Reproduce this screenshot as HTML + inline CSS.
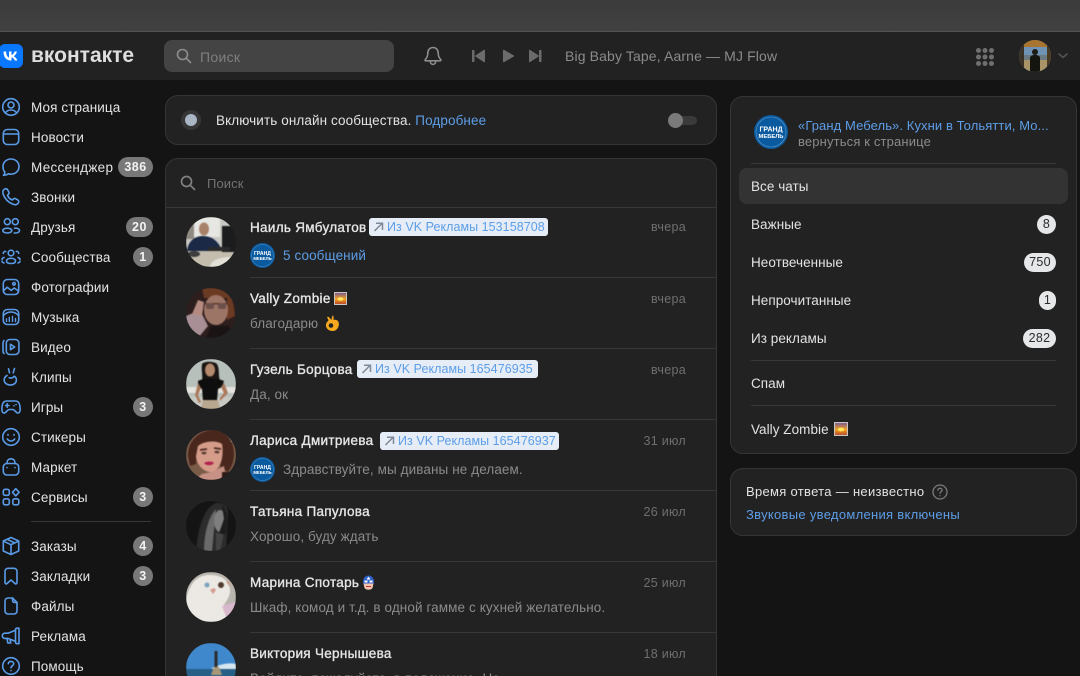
<!DOCTYPE html>
<html lang="ru"><head><meta charset="utf-8"><title>ВКонтакте</title>
<style>
*{box-sizing:border-box}
html,body{margin:0;width:1080px;height:676px;overflow:hidden;background:#141414;font-family:"Liberation Sans","Noto Sans CJK SC",sans-serif;color:#e1e3e6}
#r{position:absolute;left:0;top:0;width:1080px;height:676px;overflow:hidden;background:#141414}
.a{position:absolute;white-space:nowrap}
svg{display:block}
.t{position:absolute;white-space:nowrap;font-size:13.5px;line-height:18px;letter-spacing:.1px;margin-top:1px}
.nav{left:31px;color:#e3e3e3}
.ic{position:absolute;left:0;width:22px;height:22px;fill:none;stroke:#5a9be8;stroke-width:1.6;stroke-linecap:round;stroke-linejoin:round}
.b{position:absolute;height:20px;border-radius:10px;background:#787878;color:#f2f2f2;font-weight:bold;font-size:12.5px;line-height:20px;text-align:center;letter-spacing:.5px}
.card{position:absolute;background:#222;border:1px solid #353535;border-radius:13px}
.n{left:250px;color:#e6e6e6;letter-spacing:.3px;-webkit-text-stroke:.35px #e6e6e6}
.s{color:#8b8b8b}
.d{position:absolute;height:1px;background:#373737}
.time{position:absolute;color:#6f6f6f;font-size:12.5px;line-height:18px;right:394px;letter-spacing:.3px;white-space:nowrap}
.tag{position:absolute;height:18px;background:#e6edf6;border-radius:3px;color:#5d9ee8;font-size:12.5px;line-height:18px;padding-left:18px;white-space:nowrap;letter-spacing:.05px}
.tag svg{position:absolute;left:4px;top:4px}
.av{position:absolute;left:186px;width:50px;height:50px;border-radius:50%;overflow:hidden}
.av svg{filter:blur(.5px)}
.p{position:absolute;height:19px;border-radius:10px;background:#e6e7e9;color:#2b2b2b;font-size:12.5px;line-height:19px;text-align:center;letter-spacing:.3px}
.m{position:absolute;left:751px;color:#e3e3e3;letter-spacing:.05px}
</style></head><body><div id="r">

<div class="a" style="left:0;top:0;width:1080px;height:31px;background:linear-gradient(#3b3b3b,#414141)"></div>
<div class="a" style="left:0;top:31px;width:1080px;height:1px;background:#555"></div>
<div class="a" style="left:0;top:32px;width:1080px;height:48px;background:#222"></div>

<!-- logo -->
<div class="a" style="left:-1px;top:44px;width:24px;height:24px;border-radius:6px;background:#0a77ff">
<svg width="24" height="24" viewBox="0 0 24 24"><path d="M4.500 7.500h2.600c.1 4 1.600 5.700 2.900 6V7.500h2.500v3.500c1.200-.1 2.500-1.600 3-3.500h2.400c-.4 2.300-2 4-3.200 4.700 1.200.6 3 2 3.700 4.300h-2.700c-.6-1.700-1.900-3-3.200-3.100V16.500h-.4c-5 0-7.500-3.300-7.600-9z" fill="#fff"/></svg></div>
<div class="a" style="left:31px;top:42px;font-size:21px;line-height:28px;font-weight:bold;color:#dedede">вконтакте</div>

<!-- header search -->
<div class="a" style="left:164px;top:40px;width:230px;height:32px;border-radius:8px;background:#444"></div>
<svg class="a" style="left:176px;top:48px" width="16" height="16" viewBox="0 0 16 16" fill="none" stroke="#8e8e8e" stroke-width="1.600" stroke-linecap="round"><circle cx="6.500" cy="6.500" r="5"/><path d="M10.300 10.300 14.500 14.500"/></svg>
<div class="t" style="left:200px;top:47px;color:#7f7f7f;font-size:14px;letter-spacing:.3px">Поиск</div>

<!-- bell & player -->
<svg class="a" style="left:422px;top:45px" width="22" height="22" viewBox="0 0 22 22" fill="none" stroke="#8c8c8c" stroke-width="1.600" stroke-linejoin="round"><path d="M11 2.500c-3.300 0-5.200 2.500-5.200 5.700 0 3.200-1 4.800-2.600 6.400-.4.500-.1 1.200.5 1.200h14.600c.6 0 .9-.7.500-1.200-1.600-1.600-2.600-3.200-2.600-6.400 0-3.200-1.900-5.700-5.200-5.700z"/><path d="M8.300 16.200c0 1.900 1.200 3.200 2.700 3.200s2.700-1.300 2.700-3.200"/></svg>
<svg class="a" style="left:470px;top:48px" width="74" height="16" viewBox="0 0 74 16" fill="#6b6b6b"><rect x="2" y="2" width="2.500" height="12" rx=".6"/><path d="M15 2.300v11.400c0 .5-.5.700-.9.500L5.400 8.500c-.4-.2-.4-.8 0-1L14.100 1.800c.4-.2.900 0 .9.500z"/><path d="M33 2.300v11.400c0 .5.500.7.900.5l10-5.700c.4-.2.400-.8 0-1l-10-5.700c-.4-.2-.9 0-.9.500z"/><rect x="69" y="2" width="2.500" height="12" rx=".6"/><path d="M59 2.300v11.400c0 .5.500.7.900.5l8.700-5.700c.4-.2.400-.8 0-1L59.900 1.800c-.4-.2-.9 0-.9.500z"/></svg>
<div class="t" style="left:565px;top:46px;color:#8b8b8b;font-size:14px;letter-spacing:.13px">Big Baby Tape, Aarne — MJ Flow</div>

<svg class="a" style="left:975px;top:47px" width="20" height="20" viewBox="0 0 20 20" fill="#6f6f6f"><circle cx="3.500" cy="3.500" r="2.500"/><circle cx="10" cy="3.500" r="2.500"/><circle cx="16.500" cy="3.500" r="2.500"/><circle cx="3.500" cy="10" r="2.500"/><circle cx="10" cy="10" r="2.500"/><circle cx="16.500" cy="10" r="2.500"/><circle cx="3.500" cy="16.500" r="2.500"/><circle cx="10" cy="16.500" r="2.500"/><circle cx="16.500" cy="16.500" r="2.500"/></svg>
<svg class="a" style="left:1019px;top:40px" width="32" height="32" viewBox="0 0 32 32"><defs><clipPath id="h"><circle cx="16" cy="16" r="16"/></clipPath></defs><g clip-path="url(#h)"><rect width="32" height="32" fill="#4f6f8a"/><rect width="32" height="7" fill="#a8742f"/><rect y="7" width="32" height="8" fill="#6f93b4"/><rect y="15" width="32" height="5" fill="#6a7a80"/><rect y="20" width="32" height="12" fill="#a99468"/><rect width="5" height="32" fill="#3a3226"/><rect x="28" width="4" height="32" fill="#4a3a22"/><path d="M11 32V18c0-2 2-3 5-3s5 1 5 3v14z" fill="#14150f"/><circle cx="16" cy="12" r="3" fill="#1d1a14"/></g></svg>
<svg class="a" style="left:1058px;top:53px" width="10" height="6" viewBox="0 0 10 6" fill="none" stroke="#555" stroke-width="1.500" stroke-linecap="round"><path d="M1 1l4 3.500L9 1"/></svg>

<!-- left nav -->
<svg class="ic" style="top:96px" viewBox="0 0 22 22"><circle cx="11" cy="11" r="8.300"/><circle cx="11" cy="9" r="3"/><path d="M5.300 17c1.300-2.200 3.300-3 5.700-3s4.400.8 5.700 3"/></svg>
<div class="t nav" style="top:98px">Моя страница</div>
<svg class="ic" style="top:126px" viewBox="0 0 22 22"><rect x="3.300" y="3.500" width="15.400" height="15" rx="4"/><path d="M3.300 8h15.400"/></svg>
<div class="t nav" style="top:128px">Новости</div>
<svg class="ic" style="top:156px" viewBox="0 0 22 22"><path d="M11 3c4.600 0 8 3.400 8 7.600s-3.400 7.600-8 7.600c-.9 0-1.800-.1-2.600-.4-1.200.8-3 1.700-4.900 1.500.8-.9 1.300-2 1.400-3.100C3.700 15 3 13 3 10.600 3 6.400 6.400 3 11 3z"/></svg>
<div class="t nav" style="top:158px;letter-spacing:.3px">Мессенджер</div>
<div class="b" style="left:118px;top:157px;width:35px">386</div>
<svg class="ic" style="top:186px" viewBox="0 0 22 22"><path d="M4.300 3.300c1.400-1 2.500-.7 3.200.4l1.300 2.200c.5.900.3 1.700-.4 2.400l-.9.900c.8 2.200 2.600 4 4.800 4.800l.9-.9c.7-.7 1.500-.9 2.400-.4l2.200 1.300c1.100.7 1.400 1.800.4 3.200-1.100 1.500-3 1.900-5 1.100-4.800-1.800-8.200-5.200-10-10-.7-2-.3-3.900 1.100-5z"/></svg>
<div class="t nav" style="top:188px">Звонки</div>
<svg class="ic" style="top:216px" viewBox="0 0 22 22"><circle cx="7.300" cy="5.700" r="3"/><circle cx="15.300" cy="5.700" r="3"/><path d="M2.800 14.500c0-1.300 2-2.300 4.500-2.300s4.500 1 4.500 2.300-1.500 2.500-4.500 2.500-4.500-1.200-4.500-2.500z"/><path d="M14.500 12.200h1.500c2 0 3.500 1 3.500 2.300s-1.500 2.500-3.800 2.500h-1.500"/></svg>
<div class="t nav" style="top:218px">Друзья</div>
<div class="b" style="left:126px;top:217px;width:27px">20</div>
<svg class="ic" style="top:246px" viewBox="0 0 22 22"><circle cx="11" cy="7" r="2.800"/><path d="M6.500 15c0-1.700 2-2.700 4.500-2.700s4.500 1 4.500 2.700-1.800 2.500-4.500 2.500-4.500-.8-4.500-2.500z"/><path d="M16.300 5.500c1.500-.2 2.500.7 2.400 2M5.700 5.500c-1.500-.2-2.500.7-2.400 2M18 11.500c1.300.3 2 1.200 2 2.200M4 11.500c-1.300.3-2 1.200-2 2.200M18 17c1-.2 1.700-.7 2-1.400M4 17c-1-.2-1.700-.7-2-1.400"/></svg>
<div class="t nav" style="top:248px">Сообщества</div>
<div class="b" style="left:133px;top:247px;width:20px">1</div>
<svg class="ic" style="top:276px" viewBox="0 0 22 22"><rect x="3.300" y="3.500" width="15.400" height="15" rx="4"/><circle cx="14" cy="7.800" r="1.300"/><path d="M3.500 14.800l3.700-3.600 4 3.200 3-2.400 4.300 3"/></svg>
<div class="t nav" style="top:278px">Фотографии</div>
<svg class="ic" style="top:306px" viewBox="0 0 22 22"><rect x="3.300" y="3.500" width="15.400" height="15" rx="4"/><path d="M3.500 9.500C6 6.800 8.500 6 11 6s5 .8 7.500 3.500M6.500 13v2.500M9.300 11.500v4M12.500 10.500v5M15.500 12.500v3" stroke-width="1.400"/></svg>
<div class="t nav" style="top:308px">Музыка</div>
<svg class="ic" style="top:336px" viewBox="0 0 22 22"><rect x="6.300" y="3.500" width="12.600" height="15" rx="3.500"/><path d="M4 4.500c-.8.700-1 1.500-1 2.500v8c0 1 .2 1.800 1 2.500"/><path d="M10.500 8.300v5.400l4.200-2.700z"/></svg>
<div class="t nav" style="top:338px">Видео</div>
<svg class="ic" style="top:366px" viewBox="0 0 22 22"><path d="M8.500 2.800l1 4M14.500 2.500l-1.300 4.300"/><path d="M7 9.500c-1.800 1-2.800 2.800-2.800 4.500 0 3 2.700 5 6.200 5s6-2 6-5c0-1.700-.8-3-2.200-3.800-1.300 1.800-3 2.300-5 1.600"/></svg>
<div class="t nav" style="top:368px">Клипы</div>
<svg class="ic" style="top:396px" viewBox="0 0 22 22"><path d="M6.500 5h9c2.500 0 3.800 1.600 4.300 4.500.6 3.500.6 7.500-1.800 7.500-2.300 0-3-3.500-5.500-3.500H9.500C7 13.500 6.300 17 4 17c-2.400 0-2.400-4-1.800-7.500C2.700 6.600 4 5 6.500 5z"/><path d="M5.500 9.500h3.500M7.200 7.800v3.400M14 9.800h.1M16 8.500h.1"/></svg>
<div class="t nav" style="top:398px">Игры</div>
<div class="b" style="left:133px;top:397px;width:20px">3</div>
<svg class="ic" style="top:426px" viewBox="0 0 22 22"><circle cx="11" cy="11" r="8.300"/><path d="M7.300 13c1 1.300 2.200 2 3.700 2s2.700-.7 3.700-2M8 8.500v.6M14 8.500v.6"/></svg>
<div class="t nav" style="top:428px">Стикеры</div>
<svg class="ic" style="top:456px" viewBox="0 0 22 22"><rect x="3.300" y="7.500" width="15.400" height="11.500" rx="3.500"/><path d="M7 7.500V6.500c0-2.200 1.800-3.700 4-3.700s4 1.500 4 3.700v1M7 11.500v.1M15 11.500v.1"/></svg>
<div class="t nav" style="top:458px">Маркет</div>
<svg class="ic" style="top:486px" viewBox="0 0 22 22"><rect x="3.300" y="3.300" width="6" height="6" rx="1.800"/><rect x="3.300" y="12.800" width="6" height="6" rx="1.800"/><rect x="12.800" y="12.800" width="6" height="6" rx="1.800"/><path d="M15.800 2.700l3.300 3.600-3.300 3.600-3.300-3.600z"/></svg>
<div class="t nav" style="top:488px">Сервисы</div>
<div class="b" style="left:133px;top:487px;width:20px">3</div>
<div class="d" style="left:31px;top:521px;width:120px"></div>
<svg class="ic" style="top:535px" viewBox="0 0 22 22"><path d="M11 2.500l7.700 3.500v10L11 19.500 3.300 16V6z"/><path d="M3.500 6.200l7.500 3.500 7.500-3.500M11 9.700v9.500M7 4.300l7.600 3.600"/></svg>
<div class="t nav" style="top:537px">Заказы</div>
<div class="b" style="left:133px;top:536px;width:20px">4</div>
<svg class="ic" style="top:565px" viewBox="0 0 22 22"><path d="M5 6.500c0-2 1.300-3.200 3.200-3.200h5.600c1.900 0 3.200 1.200 3.200 3.200v11c0 1.300-1.100 1.800-2 1l-4-3.500-4 3.500c-.9.800-2 .3-2-1z"/></svg>
<div class="t nav" style="top:567px">Закладки</div>
<div class="b" style="left:133px;top:566px;width:20px">3</div>
<svg class="ic" style="top:595px" viewBox="0 0 22 22"><path d="M12.500 3H8.300C6 3 5 4.200 5 6.500v9C5 17.800 6 19 8.300 19h5.400c2.300 0 3.300-1.200 3.300-3.500V7.500z"/><path d="M12.500 3v2c0 1.800.9 2.500 2.500 2.500h2"/></svg>
<div class="t nav" style="top:597px">Файлы</div>
<svg class="ic" style="top:625px" viewBox="0 0 22 22"><path d="M15.500 5.200 8 8.200H5c-1.600 0-2.700 1-2.700 2.600s1.100 2.600 2.700 2.600h3l7.500 3"/><path d="M15.500 4.800c0-1 .6-1.600 1.600-1.600h1.900v15.500h-1.900c-1 0-1.600-.6-1.600-1.600zM7 13.500l.8 4.500h3l-.8-3.500"/></svg>
<div class="t nav" style="top:627px">Реклама</div>
<svg class="ic" style="top:655px" viewBox="0 0 22 22"><circle cx="11" cy="11" r="8.300"/><path d="M8.300 8.700c.2-1.500 1.300-2.300 2.700-2.300 1.500 0 2.700 1 2.700 2.300 0 2.200-2.700 2-2.700 4.100M11 15.500v.1"/></svg>
<div class="t nav" style="top:657px">Помощь</div>

<!-- online card -->
<div class="card" style="left:165px;top:95px;width:552px;height:50px"></div>
<div class="a" style="left:181px;top:110px;width:20px;height:20px;border-radius:50%;background:#363636"></div>
<div class="a" style="left:185px;top:114px;width:12px;height:12px;border-radius:50%;background:#aab5c5"></div>
<div class="t" style="left:216px;top:111px;color:#e3e3e3">Включить онлайн сообщества. <span style="color:#5d9ee8">Подробнее</span></div>
<div class="a" style="left:672px;top:116px;width:25px;height:9px;border-radius:5px;background:#3a3a3a"></div>
<div class="a" style="left:668px;top:113px;width:15px;height:15px;border-radius:50%;background:#7a7a7a"></div>

<!-- chats card -->
<div class="card" style="left:165px;top:158px;width:552px;height:540px"></div>
<svg class="a" style="left:180px;top:175px" width="16" height="16" viewBox="0 0 16 16" fill="none" stroke="#808080" stroke-width="1.700" stroke-linecap="round"><circle cx="6.500" cy="6.500" r="5"/><path d="M10.300 10.300 14.500 14.500"/></svg>
<div class="t" style="left:207px;top:174px;color:#737373;font-size:13px">Поиск</div>
<div class="d" style="left:166px;top:207px;width:550px"></div>

<!-- row 1 -->
<div class="av" style="top:217px"><svg width="50" height="50" viewBox="0 0 50 50"><rect width="50" height="50" fill="#c9c7c2"/><rect x="8" y="0" width="26" height="20" fill="#e6e6e2"/><rect y="0" width="8" height="22" fill="#8f8a80"/><path d="M0 33h50v17H0z" fill="#c4bdae"/><rect x="36" y="9" width="14" height="26" fill="#1b1c1e"/><path d="M1 34c1-10 8-15 16-15s14 4 18 12l-3 3H4z" fill="#1c2946"/><ellipse cx="18" cy="12" rx="5" ry="6.500" fill="#a98068"/><rect x="22" y="30" width="22" height="4" fill="#2a2a2a"/><ellipse cx="8" cy="37" rx="6" ry="3" fill="#3d3d3d"/><path d="M24 50c0-6 8-10 22-10v10z" fill="#e3e0d8"/></svg></div>
<div class="t n" style="top:218px">Наиль Ямбулатов</div>
<div class="tag" style="left:369px;top:218px;width:179px"><svg width="11" height="10" viewBox="0 0 11 10" fill="none" stroke="#7e8a99" stroke-width="1.500"><path d="M1.500 9 9 1.500M3 1.200h6.500V8"/></svg>Из VK Рекламы 153158708</div>
<div class="time" style="top:218px">вчера</div>
<svg class="a" style="left:250px;top:243px" width="25" height="25" viewBox="0 0 34 34"><circle cx="17" cy="17" r="17" fill="#0a5aa0"/><circle cx="17" cy="17" r="15" fill="none" stroke="#5f9bcb" stroke-width=".6"/><text x="17" y="16.500" text-anchor="middle" font-family="Liberation Sans" font-size="7" font-weight="bold" fill="#fff">ГРАНД</text><text x="17" y="23" text-anchor="middle" font-family="Liberation Sans" font-size="5.800" font-weight="bold" fill="#fff">МЕБЕЛЬ</text></svg>
<div class="t" style="left:283px;top:246px;color:#5d9ee8">5 сообщений</div>
<div class="d" style="left:250px;top:277px;width:466px"></div>

<!-- row 2 -->
<div class="av" style="top:288px"><svg width="50" height="50" viewBox="0 0 50 50"><rect width="50" height="50" fill="#2d1d1c"/><path d="M16 0h20c8 4 12 12 13 28l-8 4V10H18z" fill="#6b3a22"/><ellipse cx="30" cy="22" rx="12" ry="15" fill="#9d7566"/><path d="M19 15h22v1.500H19z" fill="#5a3a32"/><rect x="20" y="15" width="8" height="6" rx="2" fill="#6d4f4a"/><rect x="32" y="15" width="8" height="6" rx="2" fill="#6d4f4a"/><path d="M0 28l14-6 8 16-10 12H0z" fill="#a88f96"/><path d="M6 26l6-14 6 2-2 14z" fill="#b58a80"/><path d="M20 50l5-12h18l5 12z" fill="#1b1415"/></svg></div>
<div class="t n" style="top:289px">Vally Zombie</div>
<svg class="a" style="left:334px;top:292px" width="13" height="13" viewBox="0 0 13 13"><defs><linearGradient id="s" x1="0" y1="0" x2="0" y2="1"><stop offset="0" stop-color="#7a5a8c"/><stop offset=".55" stop-color="#f7a21d"/><stop offset="1" stop-color="#b84a2a"/></linearGradient></defs><rect width="13" height="13" fill="#c9c4bf"/><rect x="1" y="1" width="11" height="11" fill="url(#s)"/><ellipse cx="6.500" cy="7" rx="3" ry="1.800" fill="#ffe55c"/></svg>
<div class="t s" style="left:250px;top:314px">благодарю</div>
<svg class="a" style="left:323px;top:314px" width="18" height="18" viewBox="0 0 18 18"><path d="M10 1c.8 1.500.6 3.500.5 5 1.500-.5 4-.2 5 2 1.200 2.800-.5 8.500-5 9-4.500.4-8-2.500-7.500-6.500C3.300 8.500 5 7.300 5.500 6.300L4 3c.8-.6 1.800-.2 2.300.5L8.500 6C8.500 4.500 9 2.500 10 1z" fill="#f6a81f"/><circle cx="8" cy="11.500" r="2.300" fill="#222"/></svg>
<div class="time" style="top:290px">вчера</div>
<div class="d" style="left:250px;top:348px;width:466px"></div>

<!-- row 3 -->
<div class="av" style="top:359px"><svg width="50" height="50" viewBox="0 0 50 50"><rect width="50" height="50" fill="#b8c0bc"/><rect y="28" width="50" height="6" fill="#e4e2dc"/><rect y="38" width="50" height="12" fill="#c8c9c3"/><path d="M16 5c2-3 12-3 15 0 3 5 1 12 3 16l-18 1c1-6-1-11 0-17z" fill="#1a1512"/><ellipse cx="24" cy="11" rx="5" ry="6.500" fill="#b5896e"/><path d="M12 22c4-3 20-3 26 0l-2 6-4 2-1 12H17l-1-12-4-2z" fill="#0e0e0f"/><path d="M17 41h15l2 9H15z" fill="#b7a88f"/><path d="M38 24l4 10-8 8v-3l4-5-3-6zM12 24l-3 12 4 8 2-1-3-7 3-7z" fill="#a9795c"/></svg></div>
<div class="t n" style="top:360px">Гузель Борцова</div>
<div class="tag" style="left:357px;top:360px;width:181px"><svg width="11" height="10" viewBox="0 0 11 10" fill="none" stroke="#7e8a99" stroke-width="1.500"><path d="M1.500 9 9 1.500M3 1.200h6.500V8"/></svg>Из VK Рекламы 165476935</div>
<div class="time" style="top:361px">вчера</div>
<div class="t s" style="left:250px;top:385px">Да, ок</div>
<div class="d" style="left:250px;top:419px;width:466px"></div>

<!-- row 4 -->
<div class="av" style="top:430px"><svg width="50" height="50" viewBox="0 0 50 50"><rect width="50" height="50" fill="#7a5b48"/><rect x="36" y="0" width="14" height="12" fill="#d9d4cc"/><path d="M2 26C2 8 16 0 28 0s20 10 20 24c0 8-3 14-6 18l-8-6V14L12 16l-2 18-6 2z" fill="#4a271c"/><path d="M12 16c6-5 18-6 24-2 2 12-1 26-10 28-8 1-16-8-16-16z" fill="#d59c8a"/><path d="M16 44l10-2 12-6 2 14H8z" fill="#c79285"/><path d="M18 33c3-2 8-2 10 0-2 3-8 3-10 0z" fill="#b2224f"/><path d="M14 20l7-1M28 18l7 1" stroke="#4a2a22" stroke-width="1.800"/><ellipse cx="18" cy="23" rx="2.500" ry="1.300" fill="#553a34"/><ellipse cx="31" cy="22" rx="2.500" ry="1.300" fill="#553a34"/><rect x="36" y="42" width="14" height="8" fill="#2e1a14"/></svg></div>
<div class="t n" style="top:431px">Лариса Дмитриева</div>
<div class="tag" style="left:380px;top:432px;width:179px"><svg width="11" height="10" viewBox="0 0 11 10" fill="none" stroke="#7e8a99" stroke-width="1.500"><path d="M1.500 9 9 1.500M3 1.200h6.500V8"/></svg>Из VK Рекламы 165476937</div>
<div class="time" style="top:432px">31 июл</div>
<svg class="a" style="left:250px;top:457px" width="25" height="25" viewBox="0 0 34 34"><circle cx="17" cy="17" r="17" fill="#0a5aa0"/><circle cx="17" cy="17" r="15" fill="none" stroke="#5f9bcb" stroke-width=".6"/><text x="17" y="16.500" text-anchor="middle" font-family="Liberation Sans" font-size="7" font-weight="bold" fill="#fff">ГРАНД</text><text x="17" y="23" text-anchor="middle" font-family="Liberation Sans" font-size="5.800" font-weight="bold" fill="#fff">МЕБЕЛЬ</text></svg>
<div class="t s" style="left:283px;top:460px">Здравствуйте, мы диваны не делаем.</div>
<div class="d" style="left:250px;top:490px;width:466px"></div>

<!-- row 5 -->
<div class="av" style="top:501px"><svg width="50" height="50" viewBox="0 0 50 50"><rect width="50" height="50" fill="#141414"/><path d="M10 50C12 30 16 8 30 2c8-1 12 3 12 10l-2 38z" fill="#2c2c2c"/><path d="M18 50c0-16 4-34 12-42l-4 42z" fill="#6a6a6a"/><ellipse cx="34" cy="20" rx="6" ry="11" fill="#7e7e7e"/><path d="M30 32h8l-4 18h-4z" fill="#444"/><path d="M36 4c6 5 6 20 3 30l-6-2 5-14z" fill="#1c1c1c"/></svg></div>
<div class="t n" style="top:502px">Татьяна Папулова</div>
<div class="time" style="top:503px">26 июл</div>
<div class="t s" style="left:250px;top:527px">Хорошо, буду ждать</div>
<div class="d" style="left:250px;top:561px;width:466px"></div>

<!-- row 6 -->
<div class="av" style="top:572px"><svg width="50" height="50" viewBox="0 0 50 50"><rect width="50" height="50" fill="#b9b5ae"/><path d="M0 50V28C4 8 14 3 24 3c12 0 20 6 20 16 0 6-4 10-6 14l8 17z" fill="#ece9e4"/><path d="M36 34l14-4v14l-8 6z" fill="#d8b8cc"/><circle cx="21" cy="13" r="2.500" fill="#7fa2bd"/><circle cx="35" cy="13" r="3" fill="#50392e"/><path d="M24 18l4-2 2 2-3 4z" fill="#d59a8e"/><path d="M40 10l4-1 0 6z" fill="#c9a48c"/></svg></div>
<div class="t n" style="top:573px">Марина Спотарь</div>
<svg class="a" style="left:362px;top:575px" width="13" height="15" viewBox="0 0 13 15"><path d="M1 7C1 3 3.500 .5 6.500 .5S12 3 12 7v1.500H1z" fill="#2f62c9"/><path d="M1.500 8.500h10L10.500 13c-1 1.300-2.500 1.700-4 1.700S3.500 14.300 2.500 13z" fill="#f4c3b0"/><rect x="2.500" y="5.500" width="3" height="2" fill="#fff"/><rect x="7.500" y="5.500" width="3" height="2" fill="#fff"/><path d="M6.500 1.500l.6 1.400 1.400.1-1.100.9.400 1.300-1.300-.7-1.300.7.400-1.300-1.100-.9 1.400-.1z" fill="#fff"/><rect x="4" y="11" width="5" height="1" fill="#c0392b"/></svg>
<div class="time" style="top:574px">25 июл</div>
<div class="t s" style="left:250px;top:598px">Шкаф, комод и т.д. в одной гамме с кухней желательно.</div>
<div class="d" style="left:250px;top:632px;width:466px"></div>

<!-- row 7 -->
<div class="av" style="top:643px"><svg width="50" height="50" viewBox="0 0 50 50"><rect width="50" height="28" fill="#3f88cc"/><path d="M26 25c6-3 16-6 24-4v8H26z" fill="#d6e6f0"/><rect y="26" width="50" height="24" fill="#285f86"/><rect x="28.500" y="8" width="3" height="16" fill="#2c2c2c"/><path d="M25 32l3-8h5l3 8z" fill="#a99878"/></svg></div>
<div class="t n" style="top:644px">Виктория Чернышева</div>
<div class="time" style="top:645px">18 июл</div>
<div class="t s" style="left:250px;top:669px">Войдите, пожалуйста, в положение. Но</div>

<!-- right menu -->
<div class="card" style="left:730px;top:96px;width:347px;height:358px"></div>
<svg class="a" style="left:754px;top:115px" width="34" height="34" viewBox="0 0 34 34"><circle cx="17" cy="17" r="17" fill="#0a5aa0"/><circle cx="17" cy="17" r="15" fill="none" stroke="#5f9bcb" stroke-width=".6"/><text x="17" y="16.500" text-anchor="middle" font-family="Liberation Sans" font-size="7" font-weight="bold" fill="#fff">ГРАНД</text><text x="17" y="23" text-anchor="middle" font-family="Liberation Sans" font-size="5.800" font-weight="bold" fill="#fff">МЕБЕЛЬ</text></svg>
<div class="t" style="left:798px;top:116px;color:#5d9ee8;font-size:13px;letter-spacing:.09px">«Гранд Мебель». Кухни в Тольятти, Мо...</div>
<div class="t s" style="left:798px;top:132px;font-size:13px;letter-spacing:.15px">вернуться к странице</div>
<div class="d" style="left:751px;top:163px;width:305px"></div>
<div class="a" style="left:739px;top:168px;width:329px;height:36px;border-radius:8px;background:#333"></div>
<div class="t m" style="top:177px">Все чаты</div>
<div class="t m" style="top:215px">Важные</div>
<div class="p" style="left:1037px;top:215px;width:19px">8</div>
<div class="t m" style="top:253px">Неотвеченные</div>
<div class="p" style="left:1024px;top:253px;width:32px">750</div>
<div class="t m" style="top:291px">Непрочитанные</div>
<div class="p" style="left:1039px;top:291px;width:17px">1</div>
<div class="t m" style="top:329px">Из рекламы</div>
<div class="p" style="left:1023px;top:329px;width:33px">282</div>
<div class="d" style="left:751px;top:360px;width:305px"></div>
<div class="t m" style="top:374px">Спам</div>
<div class="d" style="left:751px;top:405px;width:305px"></div>
<div class="t m" style="top:420px">Vally Zombie</div>
<svg class="a" style="left:834px;top:422px" width="14" height="14" viewBox="0 0 13 13"><rect width="13" height="13" fill="#c9c4bf"/><rect x="1" y="1" width="11" height="11" fill="url(#s)"/><ellipse cx="6.500" cy="7" rx="3" ry="1.800" fill="#ffe55c"/></svg>

<!-- reply card -->
<div class="card" style="left:730px;top:468px;width:347px;height:68px"></div>
<div class="t" style="left:746px;top:482px;font-size:13px;color:#e3e3e3;letter-spacing:.3px">Время ответа — неизвестно</div>
<svg class="a" style="left:932px;top:484px" width="16" height="16" viewBox="0 0 16 16" fill="none" stroke="#7b7b7b" stroke-width="1.300" stroke-linecap="round"><circle cx="8" cy="8" r="7"/><path d="M5.900 6.200c.1-1.200 1-1.900 2.100-1.900 1.200 0 2.100.8 2.100 1.800 0 1.700-2.100 1.600-2.100 3.200M8 11.600v.1"/></svg>
<div class="t" style="left:746px;top:505px;font-size:13px;color:#5d9ee8;letter-spacing:.3px">Звуковые уведомления включены</div>

</div></body></html>
